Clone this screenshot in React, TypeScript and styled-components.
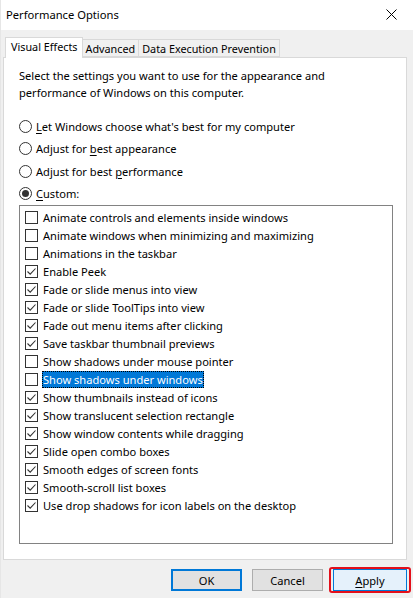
import React from "react";
import styled, { createGlobalStyle } from "styled-components";

const Global = createGlobalStyle`
  html, body { margin: 0; padding: 0; background: #f0f0f0; }
  body { font-family: "Segoe UI", "Noto Sans", sans-serif; font-size: 11.1px; color: #000; }
  * { box-sizing: border-box; }
`;

const Window = styled.div`
  width: 413px;
  height: 598px;
  display: flex;
  flex-direction: column;
  background: #f0f0f0;
  border-left: 1px solid #e6e6e6;
  overflow: hidden;
`;

const TitleBar = styled.div`
  height: 30px;
  flex: none;
  background: #fff;
  display: flex;
  align-items: center;
  justify-content: space-between;
  padding: 0 16px 2px 5px;
  font-size: 11.2px;
`;

const CloseIcon = styled.svg`
  width: 11px;
  height: 11px;
`;

const Body = styled.div`
  flex: 1;
  display: flex;
  flex-direction: column;
  padding: 7px 6px 0 2px;
`;

const TabStrip = styled.div`
  display: flex;
  align-items: flex-end;
  height: 20px;
  padding-left: 2px;
  position: relative;
  z-index: 1;
`;

const Tab = styled.div<{ $active?: boolean }>`
  height: ${(p) => (p.$active ? "21px" : "18px")};
  margin-bottom: ${(p) => (p.$active ? "-1px" : "0")};
  padding: ${(p) => (p.$active ? "0 4px 3px 5px" : "0 3px")};
  display: flex;
  align-items: center;
  background: ${(p) => (p.$active ? "#fff" : "#f0f0f0")};
  border: 1px solid #d9d9d9;
  border-bottom: ${(p) => (p.$active ? "none" : "1px solid #d9d9d9")};
  margin-left: ${(p) => (p.$active ? "0" : "-1px")};
  white-space: nowrap;
  font-size: 10.8px;
`;

const Panel = styled.div`
  height: 503px;
  background: #fff;
  border: 1px solid #d9d9d9;
  padding: 9px 13px 14px 15px;
  display: flex;
  flex-direction: column;
`;

const Intro = styled.p`
  margin: 0;
  line-height: 17px;
`;

const RadioGroup = styled.div`
  display: flex;
  flex-direction: column;
  gap: 4px;
  margin-top: 16px;
`;

const RadioRow = styled.div`
  display: flex;
  align-items: center;
  height: 18.5px;
  gap: 4px;
`;

const RadioCircle = styled.span<{ $on?: boolean }>`
  width: 13px;
  height: 13px;
  border-radius: 50%;
  border: 1px solid #333;
  background: #fff;
  display: flex;
  align-items: center;
  justify-content: center;
  flex: none;
  &::after {
    content: "";
    display: ${(p) => (p.$on ? "block" : "none")};
    width: 7px;
    height: 7px;
    border-radius: 50%;
    background: #333;
  }
`;

const U = styled.span`
  text-decoration: underline;
  text-underline-offset: 2px;
`;

const ListBox = styled.div`
  margin-top: 2px;
  height: 339px;
  border: 1px solid #828282;
  background: #fff;
  padding: 2px 0 0 5px;
  display: flex;
  flex-direction: column;
`;

const Item = styled.div`
  height: 18px;
  display: flex;
  align-items: center;
  gap: 4px;
`;

const Box = styled.span`
  width: 13px;
  height: 13px;
  border: 1px solid #333;
  background: #fff;
  flex: none;
  display: flex;
  align-items: center;
  justify-content: center;
`;

const Label = styled.span<{ $sel?: boolean }>`
  padding: 1px;
  line-height: 15px;
  background: ${(p) => (p.$sel ? "#0078d7" : "transparent")};
  color: ${(p) => (p.$sel ? "#fff" : "#000")};
  outline: ${(p) => (p.$sel ? "1px dotted #000" : "none")};
  outline-offset: -1px;
`;

const Footer = styled.div`
  flex: 1;
  display: flex;
  justify-content: flex-end;
  align-items: flex-start;
  gap: 10px;
  padding: 9px 0 0 0;
`;

const Button = styled.button<{ $default?: boolean; $hot?: boolean }>`
  width: ${(p) => (p.$hot ? "74px" : "71px")};
  height: 22px;
  font-family: inherit;
  font-size: 11.1px;
  color: #000;
  background: ${(p) => (p.$hot ? "#e5f1fb" : "#e1e1e1")};
  border: ${(p) => (p.$default ? "2px solid #0078d7" : p.$hot ? "1px solid #0078d7" : "1px solid #adadad")};
  padding: 0;
  margin: 0;
`;

const Highlight = styled.div`
  margin: -2px -4px 0 -4px;
  padding: 0 2px;
  border: 2px solid #e3101b;
  border-radius: 3px;
  display: flex;
`;

const items: [string, boolean][] = [
  ["Animate controls and elements inside windows", false],
  ["Animate windows when minimizing and maximizing", false],
  ["Animations in the taskbar", false],
  ["Enable Peek", true],
  ["Fade or slide menus into view", true],
  ["Fade or slide ToolTips into view", true],
  ["Fade out menu items after clicking", true],
  ["Save taskbar thumbnail previews", true],
  ["Show shadows under mouse pointer", false],
  ["Show shadows under windows", false],
  ["Show thumbnails instead of icons", true],
  ["Show translucent selection rectangle", true],
  ["Show window contents while dragging", true],
  ["Slide open combo boxes", true],
  ["Smooth edges of screen fonts", true],
  ["Smooth-scroll list boxes", true],
  ["Use drop shadows for icon labels on the desktop", true],
];

const Check = () => (
  <svg width="11" height="11" viewBox="0 0 11 11">
    <path d="M1.5 5.5 L4.2 8.2 L9.5 2.5" fill="none" stroke="#333" strokeWidth="1.1" />
  </svg>
);

export default function App() {
  return (
    <>
      <Global />
      <Window>
        <TitleBar>
          <span>Performance Options</span>
          <CloseIcon viewBox="0 0 11 11">
            <path d="M0.5 0.5 L10.5 10.5 M10.5 0.5 L0.5 10.5" stroke="#000" strokeWidth="1" />
          </CloseIcon>
        </TitleBar>
        <Body>
          <TabStrip>
            <Tab $active>Visual Effects</Tab>
            <Tab>Advanced</Tab>
            <Tab>Data Execution Prevention</Tab>
          </TabStrip>
          <Panel>
            <Intro>
              Select the settings you want to use for the appearance and
              <br />
              performance of Windows on this computer.
            </Intro>
            <RadioGroup>
              <RadioRow>
                <RadioCircle />
                <span>
                  <U>L</U>et Windows choose what's best for my computer
                </span>
              </RadioRow>
              <RadioRow>
                <RadioCircle />
                <span>
                  Adjust for <U>b</U>est appearance
                </span>
              </RadioRow>
              <RadioRow>
                <RadioCircle />
                <span>
                  Adjust for best <U>p</U>erformance
                </span>
              </RadioRow>
              <RadioRow>
                <RadioCircle $on />
                <span>
                  <U>C</U>ustom:
                </span>
              </RadioRow>
            </RadioGroup>
            <ListBox>
              {items.map(([label, on], i) => (
                <Item key={label}>
                  <Box>{on && <Check />}</Box>
                  <Label $sel={i === 9}>{label}</Label>
                </Item>
              ))}
            </ListBox>
          </Panel>
          <Footer>
            <Button $default>OK</Button>
            <Button>Cancel</Button>
            <Highlight>
              <Button $hot>
                <U>A</U>pply
              </Button>
            </Highlight>
          </Footer>
        </Body>
      </Window>
    </>
  );
}
